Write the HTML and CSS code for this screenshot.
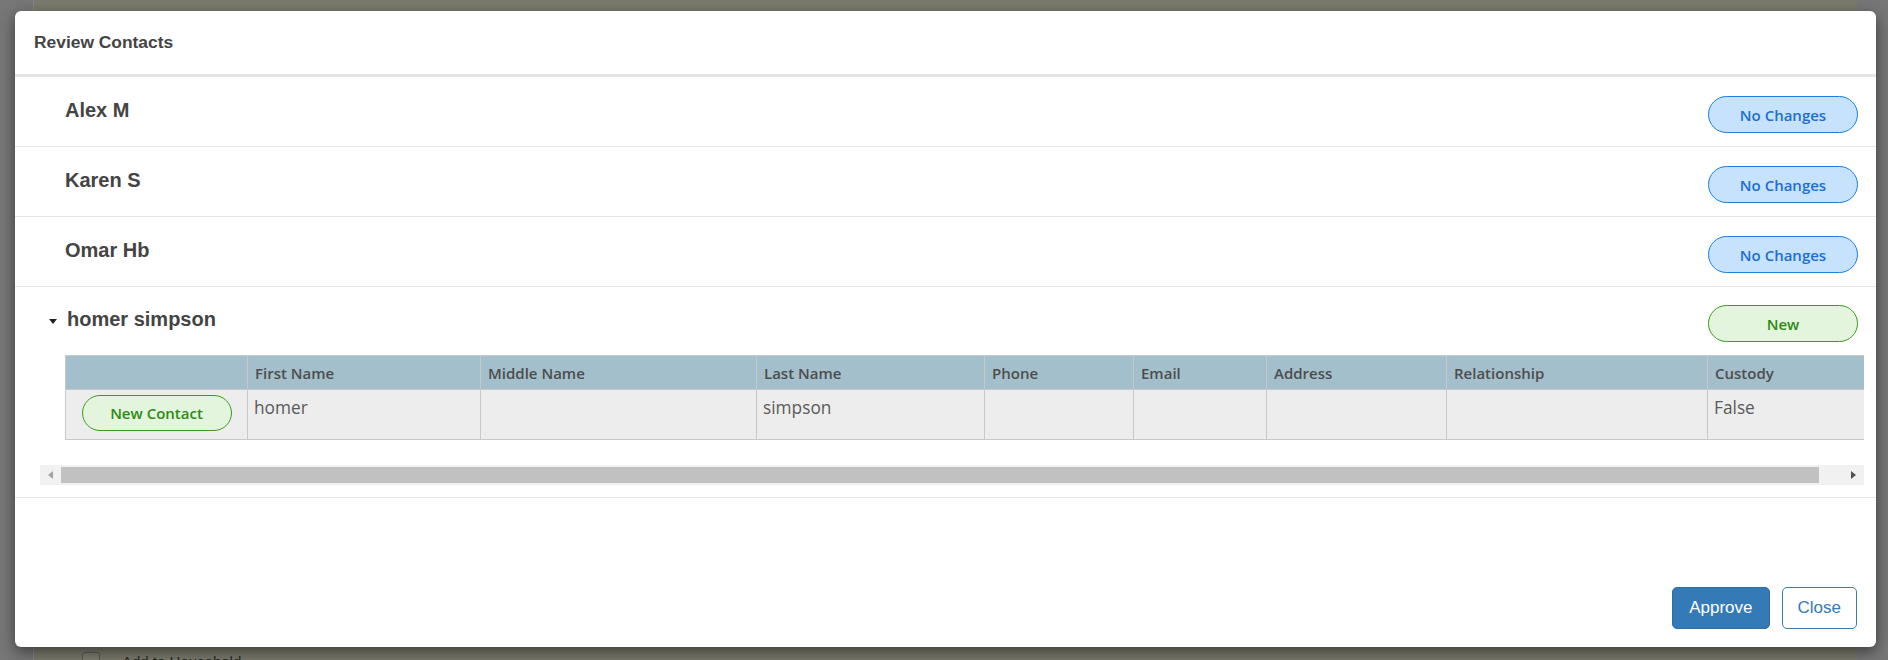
FILE: index.html
```html
<!DOCTYPE html>
<html lang="en">
<head>
<meta charset="utf-8">
<title>Review Contacts</title>
<link rel="stylesheet" href="styles.css">
</head>
<body>
<div class="page">
  <aside class="side side-left"></aside>
  <main class="page-main">
    <label class="bg-item"><span class="bg-check"></span><span class="bg-text">Add to Household</span></label>
  </main>
  <aside class="side side-right"></aside>
</div>

<div class="modal">
  <div class="modal-header"><h4 class="modal-title">Review Contacts</h4></div>
  <div class="modal-body">
    <div class="contact">
      <div class="contact-head"><span class="contact-name">Alex M</span><span class="pill pill-blue">No Changes</span></div>
    </div>
    <div class="contact">
      <div class="contact-head"><span class="contact-name">Karen S</span><span class="pill pill-blue">No Changes</span></div>
    </div>
    <div class="contact">
      <div class="contact-head"><span class="contact-name">Omar Hb</span><span class="pill pill-blue">No Changes</span></div>
    </div>
    <div class="contact contact-open">
      <div class="contact-head"><span class="caret"></span><span class="contact-name">homer simpson</span><span class="pill pill-green">New</span></div>
      <div class="grid-scroll">
        <div class="grid-viewport">
          <table class="grid">
            <colgroup>
              <col class="c-action"><col class="c-first"><col class="c-middle"><col class="c-last"><col class="c-phone"><col class="c-email"><col class="c-address"><col class="c-rel"><col class="c-custody">
            </colgroup>
            <thead>
              <tr><th></th><th>First Name</th><th>Middle Name</th><th>Last Name</th><th>Phone</th><th>Email</th><th>Address</th><th>Relationship</th><th>Custody</th></tr>
            </thead>
            <tbody>
              <tr><td class="action"><span class="pill pill-green pill-small">New Contact</span></td><td>homer</td><td></td><td>simpson</td><td></td><td></td><td></td><td></td><td>False</td></tr>
            </tbody>
          </table>
        </div>
        <div class="hscroll">
          <span class="hs-btn hs-left"><i></i></span>
          <span class="hs-track"><span class="hs-thumb"></span></span>
          <span class="hs-btn hs-right"><i></i></span>
        </div>
      </div>
    </div>
  </div>
  <div class="modal-footer">
    <button class="btn btn-primary">Approve</button>
    <button class="btn btn-outline">Close</button>
  </div>
</div>
</body>
</html>
```

FILE: styles.css
```css
html, body {
  margin: 0;
  padding: 0;
}
body {
  width: 1888px;
  height: 660px;
  overflow: hidden;
  position: relative;
  font-family: "Liberation Sans", Arial, sans-serif;
}

/* background page behind the backdrop */
.page {
  display: flex;
  height: 660px;
}
.side {
  background: #777777;
}
.side-left {
  width: 33px;
  border-right: 1px solid #868686;
}
.side-right {
  width: 31px;
}
.page-main {
  flex: 1;
  background: #7b7a6d;
}
.bg-item {
  display: flex;
  align-items: flex-start;
  padding: 652px 0 0 48px;
}
.bg-check {
  width: 16px;
  height: 16px;
  border: 1px solid #5a5a55;
  border-radius: 3px;
  background: #7f7e72;
}
.bg-text {
  margin: 2px 0 0 22px;
  font-size: 15px;
  line-height: 16px;
  color: #2a2a27;
}

/* modal */
.modal {
  position: absolute;
  left: 15px;
  top: 11px;
  width: 1861px;
  height: 636px;
  background: #ffffff;
  border-radius: 6px;
  box-shadow: 0 5px 15px rgba(0, 0, 0, 0.5);
  display: flex;
  flex-direction: column;
  overflow: hidden;
}
.modal-header {
  height: 63px;
  padding-left: 19px;
  display: flex;
  align-items: center;
  border-bottom: 3px solid #e5e5e5;
}
.modal-title {
  margin: 0;
  font-size: 17.4px;
  font-weight: 700;
  color: #444444;
}

.contact {
  border-bottom: 1px solid #e5e5e5;
}
.contact-head {
  box-sizing: border-box;
  height: 69px;
  display: flex;
  align-items: flex-start;
  padding: 19px 18px 0 50px;
}
.contact-name {
  flex: 1;
  margin-top: 2px;
  font-size: 20px;
  line-height: 24px;
  font-weight: 700;
  color: #444444;
}
.contact-open .contact-head {
  height: auto;
  padding: 18px 18px 0 34px;
}
.caret {
  width: 0;
  height: 0;
  border-left: 4.5px solid transparent;
  border-right: 4.5px solid transparent;
  border-top: 5px solid #222222;
  margin: 14px 10px 0 0;
}

.pill {
  box-sizing: border-box;
  width: 150px;
  height: 37px;
  border-radius: 19px;
  border: 1px solid;
  display: flex;
  align-items: center;
  justify-content: center;
  font-family: "Open Sans", sans-serif;
  font-size: 15px;
  font-weight: 600;
}
.pill-blue {
  background: #c6e2fc;
  border-color: #1a7fe0;
  color: #1c6fd0;
}
.pill-green {
  background: #e3f5dc;
  border-color: #3c9a22;
  color: #2d8a12;
}
.pill-small {
  height: 36px;
  margin: 0 auto;
}

/* grid */
.grid-scroll {
  margin: 13px 12px 12px 25px;
}
.grid-viewport {
  overflow: hidden;
  padding: 0 0 25px 25px;
}
.grid {
  border-collapse: collapse;
  table-layout: fixed;
  width: 1825px;
}
.c-action { width: 182px; }
.c-first { width: 233px; }
.c-middle { width: 276px; }
.c-last { width: 228px; }
.c-phone { width: 149px; }
.c-email { width: 133px; }
.c-address { width: 180px; }
.c-rel { width: 261px; }
.c-custody { width: 183px; }
.grid th {
  height: 33px;
  padding: 0 7px;
  background: #a3bfcb;
  border: 1px solid #c8c8c8;
  text-align: left;
  font-family: "Open Sans", sans-serif;
  font-size: 15px;
  font-weight: 600;
  color: #4d4d4d;
  white-space: nowrap;
}
.grid td {
  padding: 6px 6px 0;
  background: #ededed;
  border: 1px solid #c8c8c8;
  vertical-align: top;
  font-family: "Open Sans", sans-serif;
  font-size: 17.3px;
  line-height: 24px;
  color: #5a5a5a;
}
.grid td.action {
  padding: 5px 0 8px;
  text-align: center;
}

/* horizontal scrollbar */
.hscroll {
  display: flex;
  height: 20px;
  background: #f1f1f1;
}
.hs-btn {
  width: 21px;
  display: flex;
  align-items: center;
  justify-content: center;
}
.hs-btn i {
  width: 0;
  height: 0;
  border-top: 4px solid transparent;
  border-bottom: 4px solid transparent;
}
.hs-left i {
  border-right: 5px solid #a3a3a3;
}
.hs-right i {
  border-left: 5px solid #505050;
}
.hs-track {
  flex: 1;
  display: flex;
  align-items: center;
}
.hs-thumb {
  width: 1758px;
  height: 16px;
  background: #c1c1c1;
}

/* footer */
.modal-footer {
  flex: 1;
  display: flex;
  justify-content: flex-end;
  align-items: flex-end;
  gap: 12px;
  padding: 0 19px 18px;
}
.btn {
  box-sizing: border-box;
  height: 42px;
  padding: 0 16px;
  border-radius: 5px;
  border: 1px solid;
  font-family: "Liberation Sans", Arial, sans-serif;
  font-size: 17px;
  cursor: pointer;
}
.btn-primary {
  background: #337ab7;
  border-color: #2e6da4;
  color: #ffffff;
}
.btn-outline {
  background: #ffffff;
  border-color: #337ab7;
  color: #337ab7;
  padding: 0 15px;
}
```
